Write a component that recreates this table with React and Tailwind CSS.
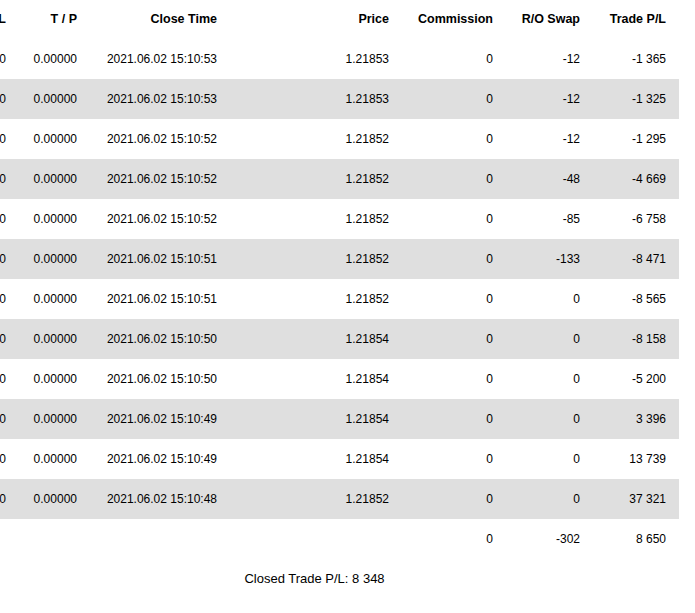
const columns = ['S / L', 'T / P', 'Close Time', 'Price', 'Commission', 'R/O Swap', 'Trade P/L']

const trades = [
  ['15:10:53', '1.21853', '-12', '-1 365'],
  ['15:10:53', '1.21853', '-12', '-1 325'],
  ['15:10:52', '1.21852', '-12', '-1 295'],
  ['15:10:52', '1.21852', '-48', '-4 669'],
  ['15:10:52', '1.21852', '-85', '-6 758'],
  ['15:10:51', '1.21852', '-133', '-8 471'],
  ['15:10:51', '1.21852', '0', '-8 565'],
  ['15:10:50', '1.21854', '0', '-8 158'],
  ['15:10:50', '1.21854', '0', '-5 200'],
  ['15:10:49', '1.21854', '0', '3 396'],
  ['15:10:49', '1.21854', '0', '13 739'],
  ['15:10:48', '1.21852', '0', '37 321'],
]

const grid = 'grid grid-cols-[69px_71px_140px_172px_104px_87px_86px] items-center'

function Cell({ children }) {
  return <div className="pr-[13px] text-right whitespace-nowrap">{children}</div>
}

export default function App() {
  return (
    <div className="w-[695px] h-[613px] overflow-hidden bg-white text-black font-['Liberation_Sans',Arial,sans-serif]">
      <div className="-ml-[50px] w-[729px]">
        <div className={`${grid} h-[39px] text-[12.5px] font-bold`}>
          {columns.map((c) => (
            <Cell key={c}>{c}</Cell>
          ))}
        </div>
        {trades.map(([time, price, swap, pl], i) => (
          <div key={i} className={`${grid} h-10 text-[12px] ${i % 2 === 1 ? 'bg-[#dfdfdf]' : ''}`}>
            <Cell>0.00000</Cell>
            <Cell>0.00000</Cell>
            <Cell>2021.06.02 {time}</Cell>
            <Cell>{price}</Cell>
            <Cell>0</Cell>
            <Cell>{swap}</Cell>
            <Cell>{pl}</Cell>
          </div>
        ))}
        <div className={`${grid} h-10 text-[12px]`}>
          <Cell />
          <Cell />
          <Cell />
          <Cell />
          <Cell>0</Cell>
          <Cell>-302</Cell>
          <Cell>8 650</Cell>
        </div>
        <div className="flex h-10 items-center justify-center text-[13px]">
          Closed Trade P/L: 8 348
        </div>
      </div>
    </div>
  )
}
